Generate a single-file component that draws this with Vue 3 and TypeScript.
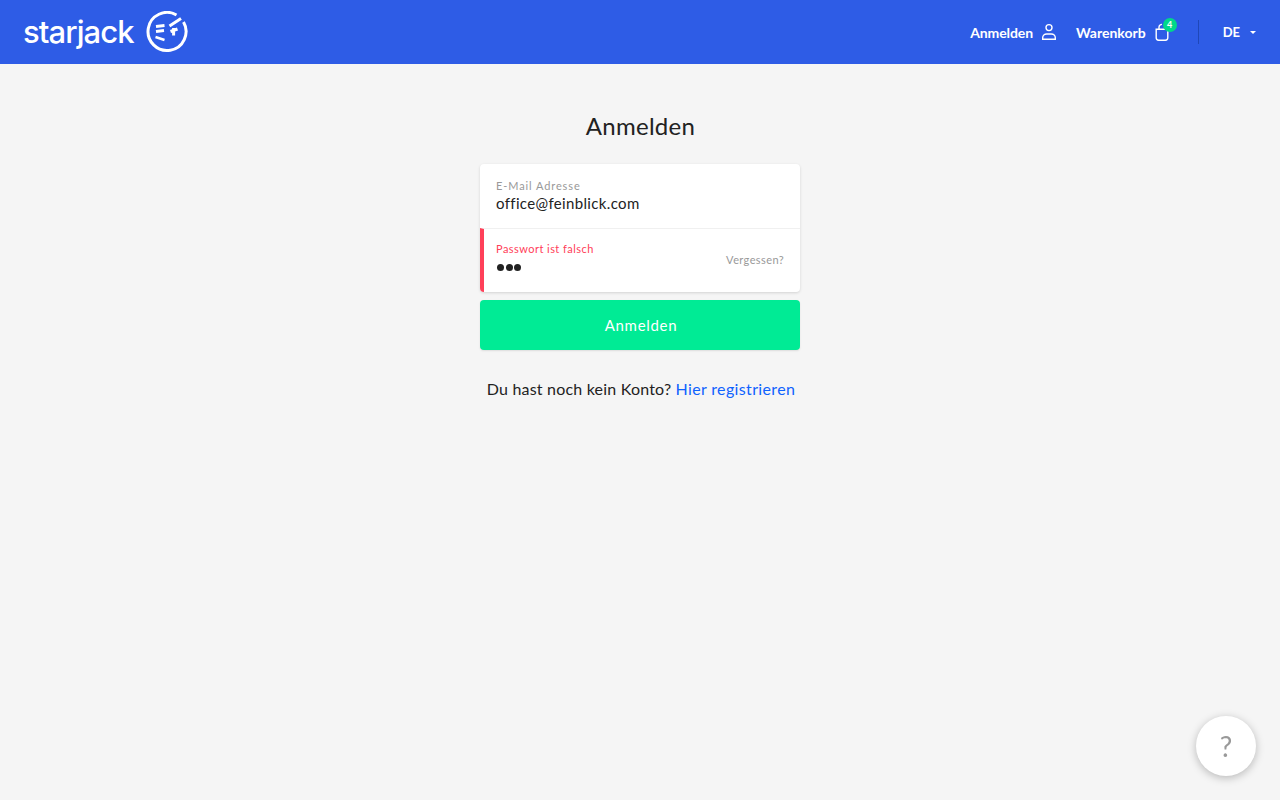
<template>
  <div class="page">
    <header class="topbar">
      <a class="logo">
        <span class="logo-text">starjack</span>
        <svg class="logo-mark" width="42" height="42" viewBox="0 0 42 42" fill="none" stroke="#fff">
          <path d="M30.5 4A19 19 0 1 0 37.5 11" stroke-width="3" />
          <path d="M35 7.5 23.5 15" stroke-width="3" />
          <path d="M10 15.5 18.5 14.5M10 20.5 18 19.5" stroke-width="3" />
          <path d="M24.5 20.5 31.5 18M27.6 17v7.5" stroke-width="3" />
          <path d="M9.5 26 18.5 29" stroke-width="2.5" />
        </svg>
      </a>
      <nav class="nav">
        <a class="nav-item">
          Anmelden
          <svg width="18" height="18" viewBox="0 0 18 18" fill="none" stroke="#fff" stroke-width="1.4">
            <circle cx="9" cy="4.6" r="3" />
            <path d="M2.7 16.2v-1.4c0-2.2 1.8-3.8 4-3.8h4.6c2.2 0 4 1.6 4 3.8v1.4z" />
          </svg>
        </a>
        <a class="nav-item cart">
          Warenkorb
          <span class="cart-icon">
            <svg width="18" height="20" viewBox="0 0 18 20" fill="none" stroke="#fff" stroke-width="1.4">
              <path d="M3.2 7.2h11.6v8.6a2.4 2.4 0 0 1-2.4 2.4H5.6a2.4 2.4 0 0 1-2.4-2.4z" />
              <path d="M6 7V5.2C6 3.6 7.2 2.4 9 2.4" />
            </svg>
            <span class="badge">4</span>
          </span>
        </a>
        <span class="divider"></span>
        <a class="lang">DE<span class="caret"></span></a>
      </nav>
    </header>

    <main class="content">
      <h1 class="title">Anmelden</h1>
      <form class="card" @submit.prevent>
        <div class="field">
          <label class="field-label">E-Mail Adresse</label>
          <div class="field-value">{{ email }}</div>
        </div>
        <div class="field has-error">
          <div class="field-main">
            <label class="field-label">Passwort ist falsch</label>
            <div class="dots"><i></i><i></i><i></i></div>
          </div>
          <a class="forgot">Vergessen?</a>
        </div>
      </form>
      <button class="submit" type="button">Anmelden</button>
      <p class="register">Du hast noch kein Konto? <a>Hier registrieren</a></p>
    </main>

    <button class="help" type="button">?</button>
  </div>
</template>

<script setup lang="ts">
import { ref } from 'vue'

const email = ref('office@feinblick.com')
</script>

<style>
html, body { background: #f5f5f5; }
</style>

<style scoped>
.page { min-height: 800px; background: #f5f5f5; font-family: "Lato", "Liberation Sans", sans-serif; color: #222; }
.topbar { height: 64px; background: #2e5ce6; color: #fff; display: flex; align-items: center; justify-content: space-between; padding: 0 24px; }
.logo { display: flex; align-items: center; gap: 12px; }
.logo-text { margin-left: -1px; font-family: "Inter", "Liberation Sans", sans-serif; font-size: 31px; font-weight: 500; line-height: 40px; letter-spacing: -0.95px; color: #fff; }
.nav { display: flex; align-items: center; font-size: 14px; font-weight: 700; }
.nav-item { display: flex; align-items: center; gap: 7px; margin-right: 18px; letter-spacing: -0.1px; }
.nav-item.cart { gap: 7px; margin-right: 27px; letter-spacing: 0; }
.cart-icon { position: relative; display: flex; }
.badge { position: absolute; top: -4px; left: 10px; width: 14px; height: 14px; border-radius: 50%; background: #00d88a; font-size: 9px; line-height: 14px; text-align: center; }
.divider { width: 1px; height: 24px; background: #1f47b8; margin: 0 24px 0 0; }
.lang { display: flex; align-items: center; gap: 10px; font-size: 13px; }
.caret { width: 0; height: 0; border: 3px solid transparent; border-top: 3px solid #fff; border-bottom: 0; }
.content { width: 320px; margin: 0 auto; display: flex; flex-direction: column; align-items: stretch; }
.title { margin: 47px 0 23px; padding-left: 1px; font-size: 24px; line-height: 30px; font-weight: 400; text-align: center; letter-spacing: 0.3px; }
.card { background: #fff; border-radius: 4px; box-shadow: 0 1px 3px rgba(0, 0, 0, 0.14); overflow: hidden; }
.field { height: 64px; box-sizing: border-box; padding: 15px 16px 0; }
.field + .field { border-top: 1px solid #f0f0f0; }
.field-label { display: block; font-size: 11px; line-height: 13px; color: #999; letter-spacing: 0.9px; }
.field-value { margin-top: 1px; font-size: 15px; line-height: 20px; letter-spacing: 0.35px; }
.has-error { display: flex; align-items: center; justify-content: space-between; padding: 0 16px 0 12px; border-left: 4px solid #ff4059; }
.has-error .field-main { align-self: flex-start; padding-top: 13px; }
.has-error .field-label { color: #ff4059; letter-spacing: 0.45px; }
.dots { display: flex; gap: 1.5px; margin: 9px 0 0 1px; height: 7px; }
.dots i { width: 7px; height: 7px; border-radius: 50%; background: #222; }
.forgot { margin-bottom: 2px; font-size: 11px; color: #999; letter-spacing: 0.4px; }
.submit { height: 50px; margin-top: 8px; padding: 0 0 0 2px; border: 0; border-radius: 4px; background: #00eb95; color: #fff; font: inherit; font-size: 15px; letter-spacing: 0.7px; box-shadow: 0 1px 2px rgba(0, 0, 0, 0.1); }
.register { margin: 29px 0 0; padding-left: 2px; text-align: center; font-size: 16px; line-height: 20px; white-space: nowrap; letter-spacing: 0.2px; }
.register a { color: #0f62fe; letter-spacing: 0.35px; }
.help { position: fixed; right: 24px; bottom: 24px; width: 60px; height: 60px; border: 0; border-radius: 50%; background: #fff; color: #999; font: inherit; font-size: 28px; box-shadow: 0 2px 8px rgba(0, 0, 0, 0.25); }
</style>
